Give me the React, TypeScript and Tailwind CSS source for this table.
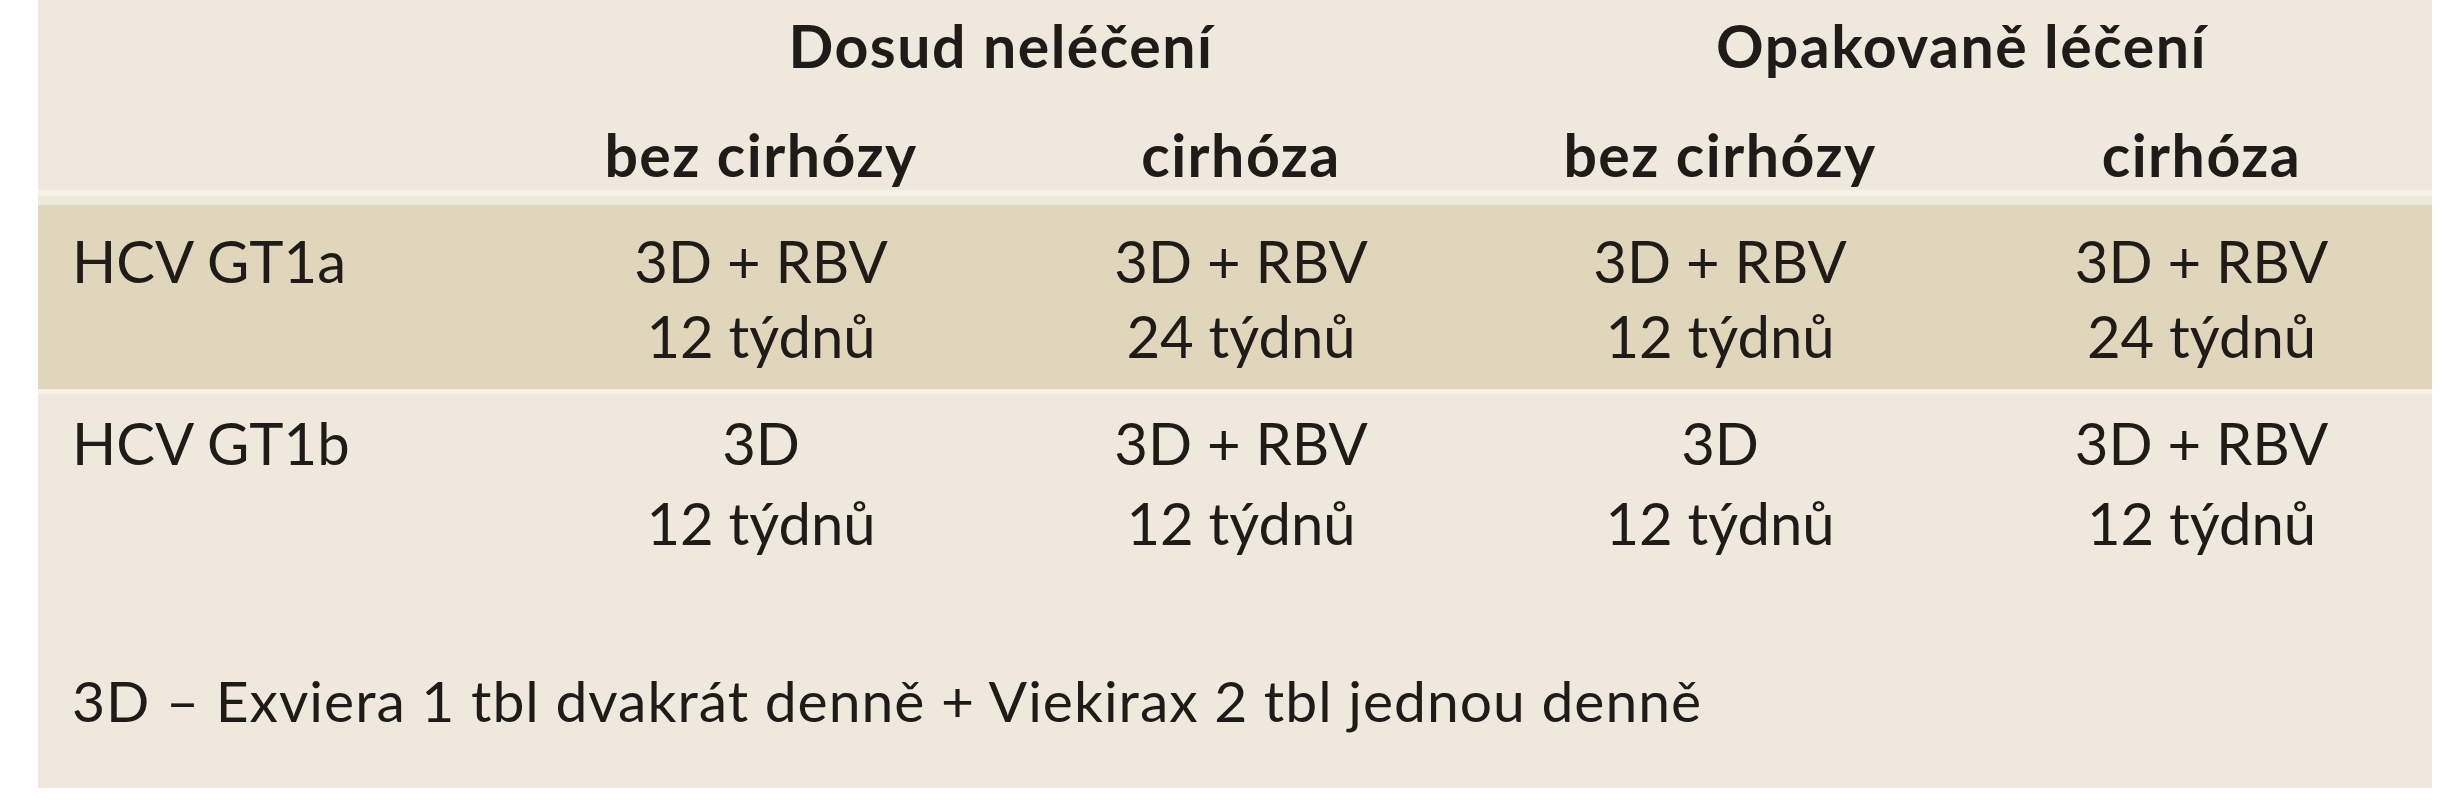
import React from "react";

const cols = "grid grid-cols-[483px_480px_480px_478px_1fr]";

function Cell({ lines, className = "" }: { lines: string[]; className?: string }) {
  return (
    <div className={`text-center ${className}`}>
      {lines.map((l, i) => (
        <div key={i}>{l}</div>
      ))}
    </div>
  );
}

export default function App() {
  return (
    <div className="w-[2449px] h-[800px] bg-white overflow-hidden">
      <div className="ml-[38px] w-[2394px] h-[788px] bg-[#efe9dd] text-[#1f1b18] font-['Lato',_sans-serif] flex flex-col">
        {/* Header row 1 */}
        <div className="grid grid-cols-[483px_960px_1fr] pt-[11px] text-[59px] leading-[70px] font-bold tracking-[1.5px]">
          <div />
          <div className="text-center">Dosud neléčení</div>
          <div className="text-center pl-[10px]">Opakovaně léčení</div>
        </div>
        {/* Header row 2 */}
        <div className={`${cols} mt-[39px] text-[59px] leading-[70px] font-bold tracking-[1.5px]`}>
          <div />
          <div className="text-center">bez cirhózy</div>
          <div className="text-center">cirhóza</div>
          <div className="text-center">bez cirhózy</div>
          <div className="text-center pl-[12px]">cirhóza</div>
        </div>
        <div className="h-[6px] bg-[#f5f1e7]" />
        <div className="h-[9px]" />
        {/* GT1a */}
        <div className={`${cols} bg-[#e0d6bb] pt-[18px] pb-[16px] text-[58px] leading-[75px]`}>
          <div className="pl-[34px]">HCV GT1a</div>
          <Cell lines={["3D + RBV", "12 týdnů"]} />
          <Cell lines={["3D + RBV", "24 týdnů"]} />
          <Cell lines={["3D + RBV", "12 týdnů"]} />
          <Cell lines={["3D + RBV", "24 týdnů"]} className="pl-[12px]" />
        </div>
        <div className="h-[5px] bg-[#f5f1e7]" />
        {/* GT1b */}
        <div className={`${cols} pt-[9px] text-[58px] leading-[80px]`}>
          <div className="pl-[34px]">HCV GT1b</div>
          <Cell lines={["3D", "12 týdnů"]} />
          <Cell lines={["3D + RBV", "12 týdnů"]} />
          <Cell lines={["3D", "12 týdnů"]} />
          <Cell lines={["3D + RBV", "12 týdnů"]} className="pl-[12px]" />
        </div>
        {/* Footnote */}
        <div className="mt-[105px] pl-[34px] text-[57px] leading-[64px] tracking-[1px]">
          3D – Exviera 1 tbl dvakrát denně + Viekirax 2 tbl jednou denně
        </div>
      </div>
    </div>
  );
}
